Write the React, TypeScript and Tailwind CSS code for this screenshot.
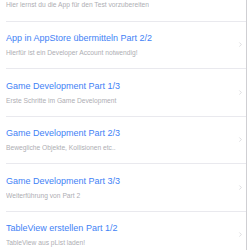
import { ChevronRight } from "lucide-react";

type Lesson = {
  title: string;
  subtitle: string;
};

// the list is scrolled, the first lesson only shows its subtitle
const topSubtitle = "Hier lernst du die App für den Test vorzubereiten";

const lessons: Lesson[] = [
  { title: "App in AppStore übermitteln Part 2/2", subtitle: "Hierfür ist ein Developer Account notwendig!" },
  { title: "Game Development Part 1/3", subtitle: "Erste Schritte im Game Development" },
  { title: "Game Development Part 2/3", subtitle: "Bewegliche Objekte, Kollisionen etc.." },
  { title: "Game Development Part 3/3", subtitle: "Weiterführung von Part 2" },
  { title: "TableView erstellen Part 1/2", subtitle: "TableView aus pList laden!" },
];

function LessonRow({ lesson }: { lesson: Lesson }) {
  return (
    <div className="ml-[6px] flex h-[47.5px] shrink-0 items-center border-b border-[#e9e9ee]">
      <div className="flex min-w-0 flex-1 flex-col pt-[1px]">
        <p className="truncate text-[9px] leading-[11px] text-[#3f82f6]">{lesson.title}</p>
        <p className="mt-[5px] truncate text-[6.7px] leading-[8px] text-[#aeaeb3]">{lesson.subtitle}</p>
      </div>
      <ChevronRight className="mr-[2px] h-[7px] w-[7px] text-[#c7c7cc]" strokeWidth={2} />
    </div>
  );
}

export default function App() {
  return (
    <main
      className="flex h-[250px] w-[250px] overflow-hidden bg-white"
      style={{ fontFamily: '"Liberation Sans", Arial, sans-serif' }}
    >
      <div className="flex w-[247px] flex-col border-r border-[#cfcfd3]">
        <div className="ml-[6px] flex h-[21.5px] shrink-0 items-start border-b border-[#e9e9ee] pt-[1px]">
          <p className="truncate text-[6.7px] leading-[8px] text-[#aeaeb3]">{topSubtitle}</p>
        </div>
        {lessons.map((lesson) => (
          <LessonRow key={lesson.title} lesson={lesson} />
        ))}
      </div>
    </main>
  );
}
